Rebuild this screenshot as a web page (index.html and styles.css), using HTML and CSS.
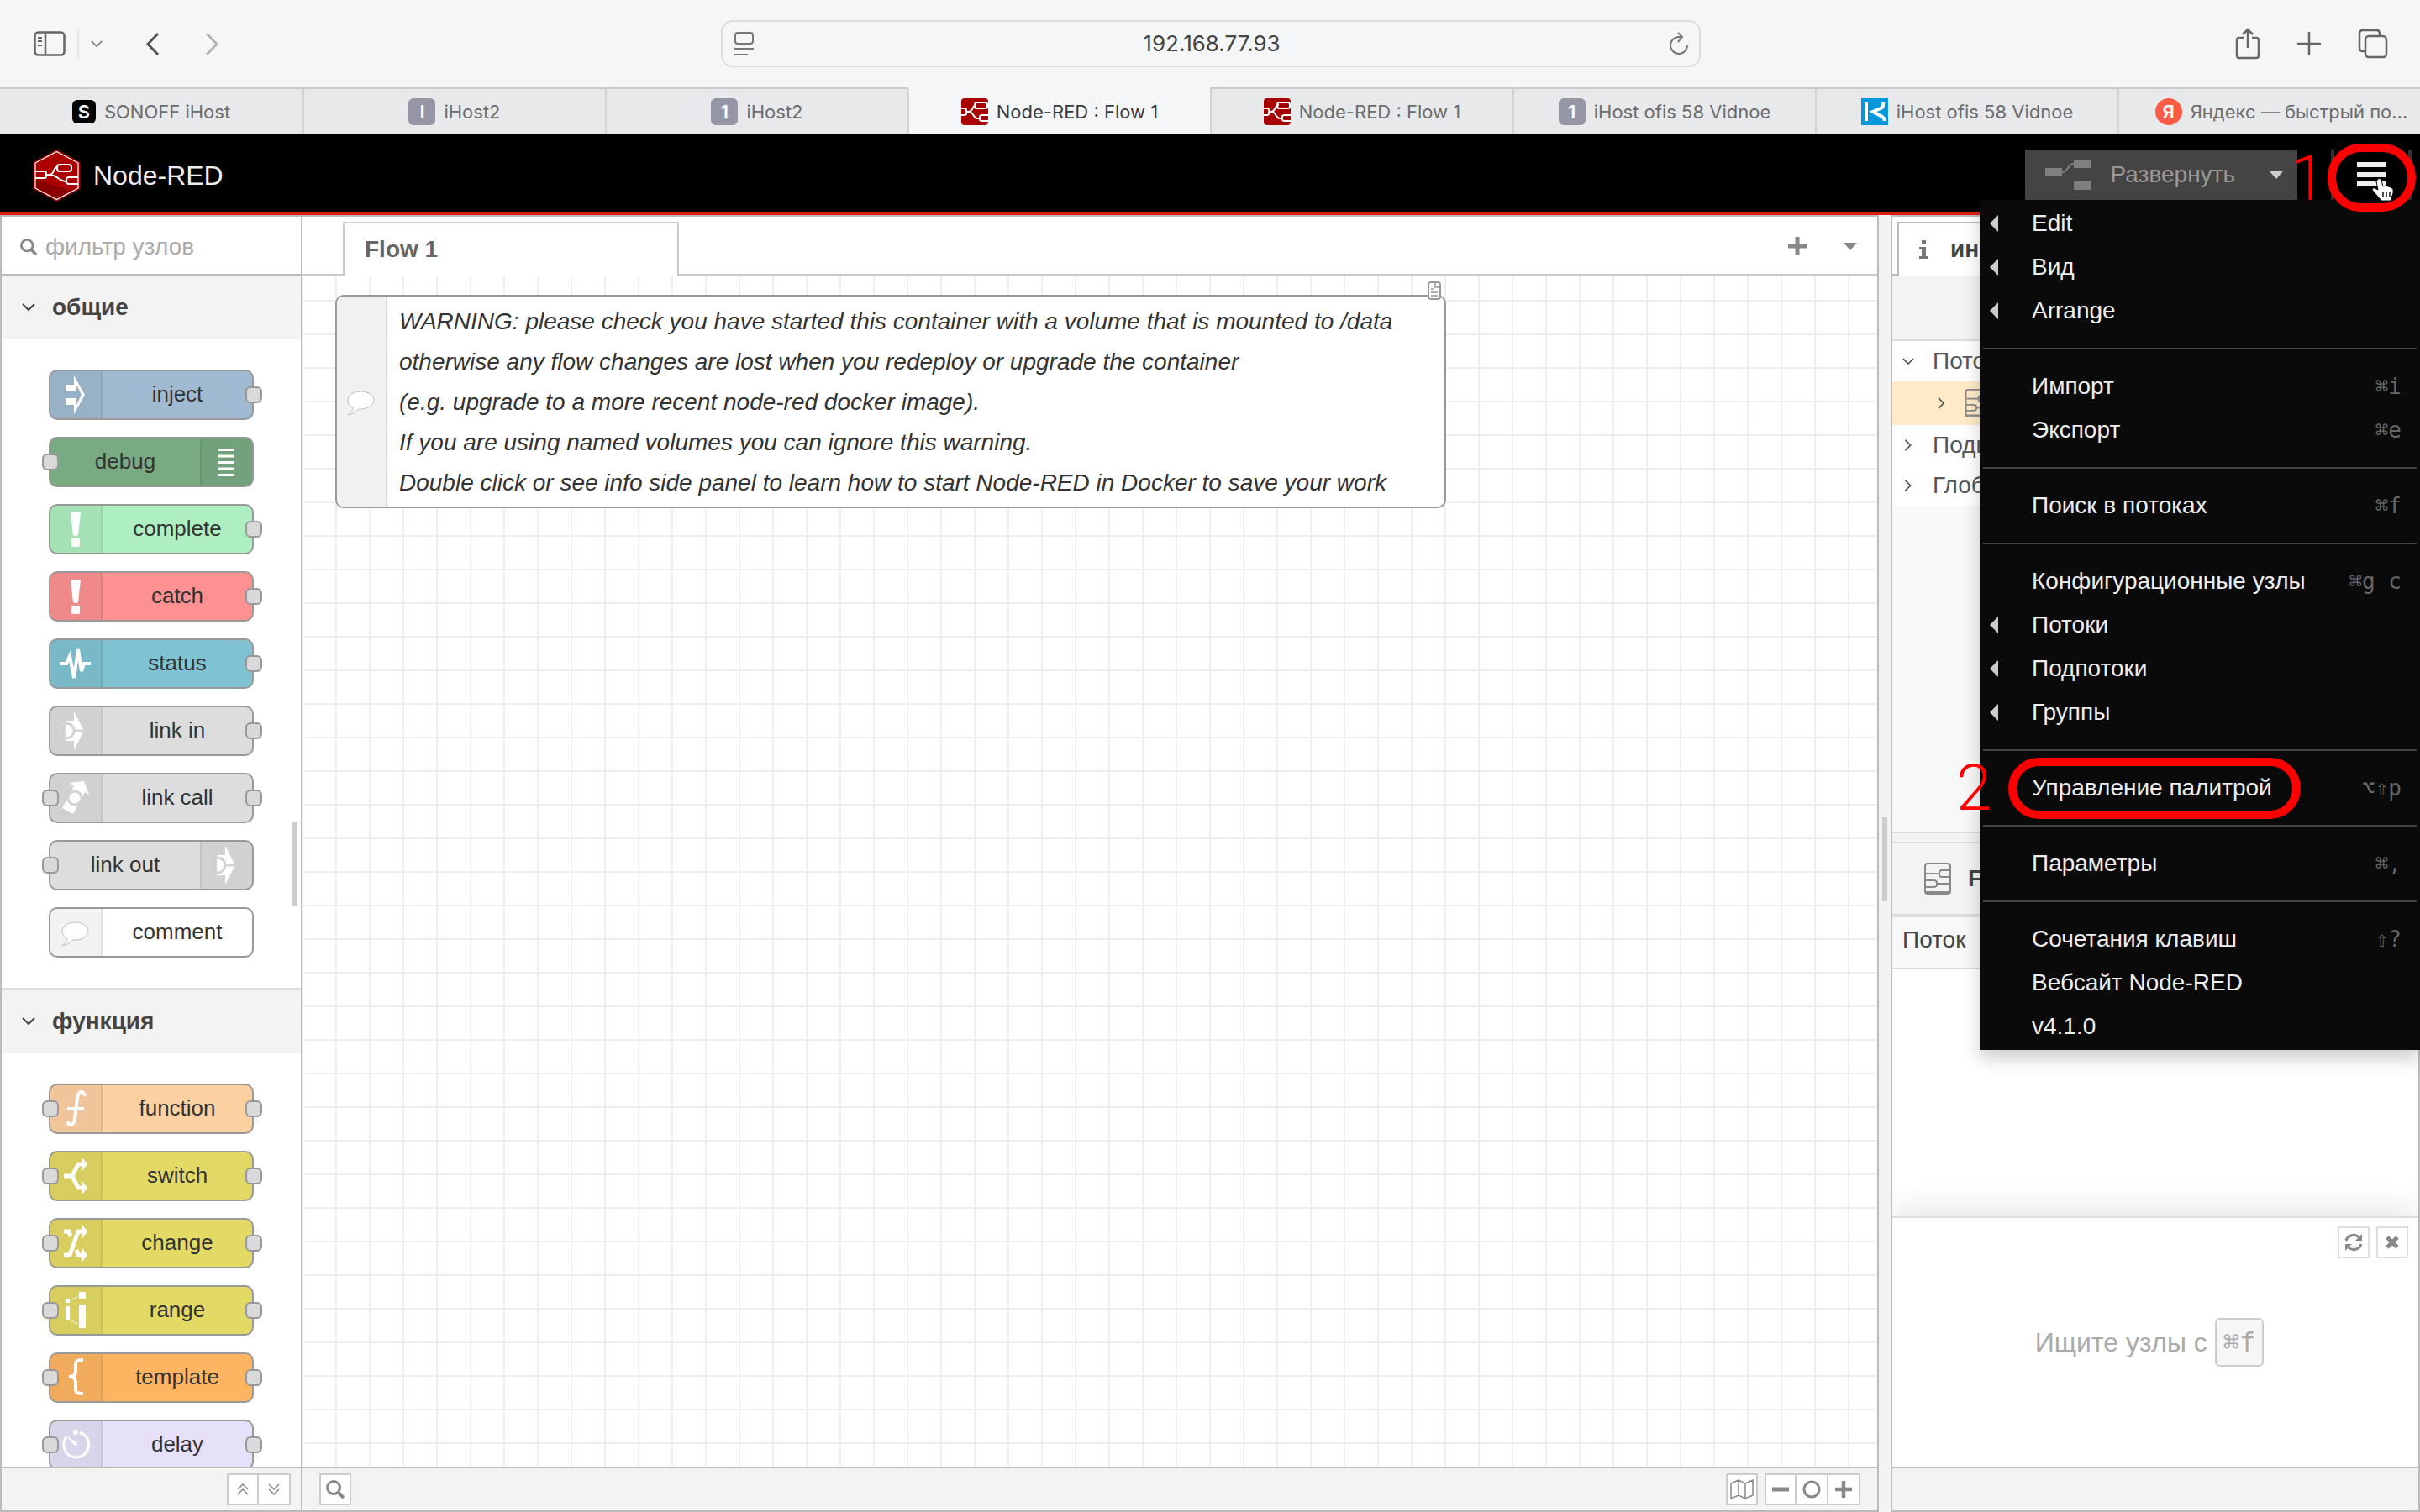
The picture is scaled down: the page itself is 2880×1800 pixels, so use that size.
FILE: index.html
```html
<!DOCTYPE html>
<html lang="ru">
<head>
<meta charset="utf-8">
<meta name="viewport" content="width=device-width, initial-scale=1">
<title>Node-RED : Flow 1</title>
<link rel="stylesheet" href="styles.css">
</head>
<body>
<svg class="defs" aria-hidden="true">
  <symbol id="nr" viewBox="0 0 32 32"><rect width="32" height="32" rx="4" fill="#a80000"/><g fill="none" stroke="#fff" stroke-width="2"><path d="M0 12h4q2 0 2 2v4q0 2-2 2H0M6 16h3c5 0 4-8 9-8M9 16c6 0 5 8 10 8h3"/><rect x="16" y="5" width="15" height="7" rx="2.500"/><path d="M32 20h-7q-3 0-3 2v3q0 2 3 2h7"/></g></symbol>
  <symbol id="logo" viewBox="0 0 55 62"><path d="M27.500 0 55 15v32L27.500 62 0 47V15z" fill="#a00"/><path d="M2 36 48 50 27 60 2 47z" fill="#800"/><path d="M27.500 2.500 53 16v30L27.500 59.500 2 46V16z" fill="none" stroke="#fff" stroke-width="1.200"/><g fill="none" stroke="#fff" stroke-width="2"><path d="M2 26h11q2 0 2 2v4q0 2-2 2H2M15 30h4c6 0 4-9 9-9M19 30c9 0 11 8 20 8"/><rect x="28" y="18" width="17" height="8" rx="3"/><path d="M53 33H42q-3 0-3 3v2q0 3 3 3h11"/></g></symbol>
  <symbol id="down" viewBox="0 0 16 10"><path d="M1 1l7 7 7-7" fill="none" stroke="currentColor" stroke-width="2"/></symbol>
  <symbol id="right" viewBox="0 0 10 16"><path d="M1 1l7 7-7 7" fill="none" stroke="currentColor" stroke-width="2"/></symbol>
  <symbol id="caret" viewBox="0 0 16 9"><path d="M0 0h16L8 9z" fill="currentColor"/></symbol>
  <symbol id="caretl" viewBox="0 0 10 20"><path d="M10 0v20L0 10z" fill="currentColor"/></symbol>
  <symbol id="search" viewBox="0 0 22 22"><circle cx="9" cy="9" r="7.500" fill="none" stroke="currentColor" stroke-width="3"/><path d="M14 14l7 7" stroke="currentColor" stroke-width="4"/></symbol>
  <symbol id="flow" viewBox="0 0 32 38"><g fill="none" stroke="currentColor" stroke-width="2"><rect x="1" y="1" width="30" height="36" rx="3"/><path d="M2 13h16M31 9H21q-3 0-3 3v2q0 3 3 3h10M30 25H15M1 21h10q4 0 4 3v2q0 3-4 3H1M1 35h30"/></g></symbol>
  <symbol id="plus" viewBox="0 0 22 22"><path d="M11 0v22M0 11h22" stroke="currentColor" stroke-width="5"/></symbol>
  <symbol id="i-link" viewBox="2 2 60 56"><path d="M20 18h10V7l12 23-12 23V42H20z" fill="#fff"/><g fill="none" stroke="#d3d3d3" stroke-width="3"><circle cx="21" cy="30" r="9"/><path d="M30 30h14"/></g></symbol>
  <symbol id="i-bang" viewBox="2 2 60 56"><path d="M26 10h12l-3 27q-3 2-6 0zM28 41h8q1 0 1 2v6q0 2-1 2h-8q-1 0-1-2v-6q0-2 1-2z" fill="#fff"/></symbol>
  <symbol id="i-comment" viewBox="2 2 60 56"><path d="M31.500 18c9 0 15.500 5 15.500 10.500S40 39 31.500 39h-3c-3 3-6 6-12 6.500 3-2 6-5 5.500-8.500-4-2-6-5-6-8.500C16 23 22.500 18 31.500 18z" fill="#fff" stroke="#bbb"/></symbol>
</svg>

<header class="browser">
  <div class="toolbar">
    <div class="tools">
      <button class="tool" aria-label="Боковая панель"><svg width="38" height="30" viewBox="0 0 38 30"><g fill="none" stroke="#666" stroke-width="2.500"><rect x="1.500" y="1.500" width="35" height="27" rx="4"/><path d="M14 2v26"/><path d="M5 8h5M5 12h5M5 17h5" stroke-width="2"/></g></svg></button>
      <button class="tool tool-more" aria-label="Группы вкладок"><svg width="14" height="9"><use href="#down"/></svg></button>
      <button class="tool tool-back" aria-label="Назад"><svg width="17" height="29" viewBox="0 0 17 29"><path d="M15 2 3 14.500 15 27" fill="none" stroke="#555" stroke-width="3"/></svg></button>
      <button class="tool tool-next" aria-label="Вперёд"><svg width="17" height="29" viewBox="0 0 17 29"><path d="M2 2l12 12.500L2 27" fill="none" stroke="#b2b4b6" stroke-width="3"/></svg></button>
    </div>
    <div class="address">
      <svg width="24" height="28" viewBox="0 0 24 28"><g fill="none" stroke="#777" stroke-width="2"><rect x="1" y="1" width="21" height="13" rx="3"/><path d="M0 20h23M0 27h16"/></g></svg>
      <input class="url" aria-label="Адрес" value="192.168.77.93">
      <button class="tool" aria-label="Обновить"><svg width="24" height="28" viewBox="0 0 24 28"><path d="M12 6a10 10 0 1 0 10 10M12 6h4M11 1l5 5-5 6" fill="none" stroke="#777" stroke-width="2"/></svg></button>
    </div>
    <div class="tools tools-end">
      <button class="tool" aria-label="Поделиться"><svg width="30" height="38" viewBox="0 0 30 38"><g fill="none" stroke="#666" stroke-width="2.500"><path d="M10 12H5q-3 0-3 3v18q0 3 3 3h20q3 0 3-3V15q0-3-3-3h-5M15 24V2M9 8l6-6 6 6"/></g></svg></button>
      <button class="tool" aria-label="Новая вкладка"><svg width="28" height="28" viewBox="0 0 28 28"><path d="M14 0v28M0 14h28" stroke="#666" stroke-width="2.500"/></svg></button>
      <button class="tool" aria-label="Все вкладки"><svg width="36" height="36" viewBox="0 0 36 36"><g fill="none" stroke="#666" stroke-width="2.500"><rect x="9" y="9" width="25" height="25" rx="4"/><path d="M9 27H6q-4 0-4-4V6q0-4 4-4h16q4 0 4 4v3"/></g></svg></button>
    </div>
  </div>
  <nav class="tabs">
    <a class="tab" href="#"><span class="fav fav-black">S</span>SONOFF iHost</a>
    <a class="tab" href="#"><span class="fav">I</span>iHost2</a>
    <a class="tab" href="#"><span class="fav">1</span>iHost2</a>
    <a class="tab tab-on" href="#"><svg width="32" height="32"><use href="#nr"/></svg>Node-RED : Flow 1</a>
    <a class="tab" href="#"><svg width="32" height="32"><use href="#nr"/></svg>Node-RED : Flow 1</a>
    <a class="tab" href="#"><span class="fav">1</span>iHost ofis 58 Vidnoe</a>
    <a class="tab" href="#"><svg width="32" height="32" viewBox="0 0 32 32"><rect width="32" height="32" fill="#0098db"/><path d="M6 5v22M26 5v3q0 3-3 4l-9 4 11 6q3 2 3 5" fill="none" stroke="#fff" stroke-width="4"/></svg>iHost ofis 58 Vidnoe</a>
    <a class="tab" href="#"><span class="fav fav-ya">Я</span>Яндекс — быстрый по...</a>
  </nav>
</header>

<header class="app-head">
  <div class="brand"><svg width="55" height="62"><use href="#logo"/></svg>Node-RED</div>
  <div class="deploy">
    <button class="deploy-go"><svg width="54" height="36" viewBox="0 0 54 36"><path d="M0 10h20v10H0zM34 0h20v10H34zM34 26h20v10H34z" fill="#7f7f7f"/><path d="M20 15c8 0 6-10 14-10" fill="none" stroke="#7f7f7f" stroke-width="2"/></svg>Развернуть</button>
    <button class="deploy-opt" aria-label="Варианты"><svg width="16" height="9"><use href="#caret"/></svg></button>
  </div>
  <div class="menu-wrap">
    <button class="burger" aria-label="Меню"><svg width="34" height="30" viewBox="0 0 34 30"><path d="M0 3h34M0 15h34M0 26h34" stroke="#eee" stroke-width="6"/></svg></button>
    <ul class="menu">
      <li><a href="#"><svg class="sub" width="10" height="20"><use href="#caretl"/></svg>Edit</a></li>
      <li><a href="#"><svg class="sub" width="10" height="20"><use href="#caretl"/></svg>Вид</a></li>
      <li><a href="#"><svg class="sub" width="10" height="20"><use href="#caretl"/></svg>Arrange</a></li>
      <li class="rule"></li>
      <li><a href="#">Импорт<kbd>⌘i</kbd></a></li>
      <li><a href="#">Экспорт<kbd>⌘e</kbd></a></li>
      <li class="rule"></li>
      <li><a href="#">Поиск в потоках<kbd>⌘f</kbd></a></li>
      <li class="rule"></li>
      <li><a href="#">Конфигурационные узлы<kbd>⌘g c</kbd></a></li>
      <li><a href="#"><svg class="sub" width="10" height="20"><use href="#caretl"/></svg>Потоки</a></li>
      <li><a href="#"><svg class="sub" width="10" height="20"><use href="#caretl"/></svg>Подпотоки</a></li>
      <li><a href="#"><svg class="sub" width="10" height="20"><use href="#caretl"/></svg>Группы</a></li>
      <li class="rule"></li>
      <li><a href="#">Управление палитрой<kbd>⌥⇧p</kbd></a><span class="ring ring-item"></span><span class="mark mark-two">2</span></li>
      <li class="rule"></li>
      <li><a href="#">Параметры<kbd>⌘,</kbd></a></li>
      <li class="rule"></li>
      <li><a href="#">Сочетания клавиш<kbd>⇧?</kbd></a></li>
      <li><a href="#">Вебсайт Node-RED</a></li>
      <li><a href="#">v4.1.0</a></li>
    </ul>
    <span class="ring ring-burger"></span>
    <span class="mark mark-one">1</span>
    <svg class="cursor" width="28" height="30" viewBox="0 0 28 30"><path d="M8 2q3-2 4 2l2 7 3-1 3 1 3 1 3 2v5l-3 9H12l-5-6-6-7q0-3 3-2l4 2L6 5z" fill="#fff" stroke="#111"/><path d="M14 17v7M18 17v7M22 17v7" stroke="#111" stroke-width="1.500"/></svg>
  </div>
</header>

<main class="editor">
  <aside class="palette">
    <label class="filter"><svg width="20" height="20"><use href="#search"/></svg><input placeholder="фильтр узлов"></label>
    <div class="palette-body">
      <h2 class="cat"><svg width="16" height="10"><use href="#down"/></svg>общие</h2>
      <ul class="nodes">
        <li class="node c-inject"><span class="ico"><svg viewBox="2 2 60 56"><path d="M20 18h10V7l13 23-13 23V42H20v-8h13v8l6-12-6-12v8H20z" fill="#fff"/></svg></span><span class="name">inject</span><i class="port out"></i></li>
        <li class="node flip c-debug"><span class="ico"><svg viewBox="2 2 60 56"><path d="M22 15.500h19M22 23h19M22 30.500h19M22 38h19M22 45.500h19" stroke="#fff" stroke-width="3"/></svg></span><span class="name">debug</span><i class="port in"></i></li>
        <li class="node c-complete"><span class="ico"><svg><use href="#i-bang"/></svg></span><span class="name">complete</span><i class="port out"></i></li>
        <li class="node c-catch"><span class="ico"><svg><use href="#i-bang"/></svg></span><span class="name">catch</span><i class="port out"></i></li>
        <li class="node c-status"><span class="ico"><svg viewBox="2 2 60 56"><path d="M13 30h8l4-9 5 26 5-34 4 26 3-9h8" fill="none" stroke="#fff" stroke-width="4"/></svg></span><span class="name">status</span><i class="port out"></i></li>
        <li class="node c-link"><span class="ico"><svg><use href="#i-link"/></svg></span><span class="name">link in</span><i class="port out"></i></li>
        <li class="node c-link"><span class="ico"><svg viewBox="2 2 60 56"><path d="M42 10l6 16-5-3-14 26-13-7 14-26-5-4z" fill="#fff"/><circle cx="31" cy="30" r="8" fill="#fff" stroke="#d3d3d3" stroke-width="3"/></svg></span><span class="name">link call</span><i class="port in"></i><i class="port out"></i></li>
        <li class="node flip c-link"><span class="ico"><svg><use href="#i-link"/></svg></span><span class="name">link out</span><i class="port in"></i></li>
        <li class="node c-comment"><span class="ico"><svg><use href="#i-comment"/></svg></span><span class="name">comment</span></li>
      </ul>
      <h2 class="cat cat-next"><svg width="16" height="10"><use href="#down"/></svg>функция</h2>
      <ul class="nodes">
        <li class="node c-function"><span class="ico"><svg viewBox="2 2 60 56"><path d="M43 15c-1-7-8-7-9 2l-3 25c-1 8-7 9-9 3M22 30h20" fill="none" stroke="#fff" stroke-width="4"/></svg></span><span class="name">function</span><i class="port in"></i><i class="port out"></i></li>
        <li class="node c-switch"><span class="ico"><svg viewBox="2 2 60 56"><path d="M18 30h10l7-14h6M28 30l7 14h6" fill="none" stroke="#fff" stroke-width="5"/><path d="M39 7l7 9-7 9zM39 35l7 9-7 9z" fill="#fff"/></svg></span><span class="name">switch</span><i class="port in"></i><i class="port out"></i></li>
        <li class="node c-switch"><span class="ico"><svg viewBox="2 2 60 56"><path d="M18 44h7l10-28h6M18 16h6l2 6M33 38l2 6h6" fill="none" stroke="#fff" stroke-width="5"/><path d="M39 7l7 9-7 9zM39 35l7 9-7 9z" fill="#fff"/></svg></span><span class="name">change</span><i class="port in"></i><i class="port out"></i></li>
        <li class="node c-switch"><span class="ico"><svg viewBox="2 2 60 56"><path d="M20 16h5v5h-5zM20 25h5v17h-5zM36 8h8v8h-8zM36 23h8v28h-8z" fill="#fff"/><path d="M27 17l7-3M27 42l7 4" stroke="#fff"/></svg></span><span class="name">range</span><i class="port in"></i><i class="port out"></i></li>
        <li class="node c-template"><span class="ico"><svg viewBox="2 2 60 56"><path d="M41 9c-8 0-9 1-9 7v6c0 5-2 7-8 7 6 0 8 2 8 7v6c0 6 1 7 9 7" fill="none" stroke="#fff" stroke-width="4"/></svg></span><span class="name">template</span><i class="port in"></i><i class="port out"></i></li>
        <li class="node c-delay"><span class="ico"><svg viewBox="2 2 60 56"><path d="M37 15.500a15 15 0 1 1-16 5" fill="none" stroke="#fff" stroke-width="3"/><path d="M20 18l14 10q1 3-3 3z" fill="#fff"/><circle cx="32" cy="15" r="3" fill="#fff"/></svg></span><span class="name">delay</span><i class="port in"></i><i class="port out"></i></li>
      </ul>
      <span class="thumb"></span>
    </div>
    <footer class="foot foot-palette">
      <div class="group">
        <button aria-label="Свернуть все"><svg width="14" height="14" viewBox="0 0 14 14"><path d="M1 7l6-6 6 6M1 13l6-6 6 6" fill="none" stroke="currentColor" stroke-width="1.500"/></svg></button>
        <button aria-label="Развернуть все"><svg width="14" height="14" viewBox="0 0 14 14"><path d="M1 1l6 6 6-6M1 7l6 6 6-6" fill="none" stroke="currentColor" stroke-width="1.500"/></svg></button>
      </div>
    </footer>
  </aside>

  <section class="workspace">
    <div class="flow-tabs">
      <a class="flow-tab" href="#">Flow 1</a>
      <button class="bare" aria-label="Добавить поток"><svg width="22" height="22"><use href="#plus"/></svg></button>
      <button class="bare bare-list" aria-label="Список потоков"><svg width="16" height="9"><use href="#caret"/></svg></button>
    </div>
    <div class="canvas">
      <div class="note">
        <span class="note-ico"><svg width="60" height="56"><use href="#i-comment"/></svg></span>
        <p class="note-text">WARNING: please check you have started this container with a volume that is mounted to /data<br>otherwise any flow changes are lost when you redeploy or upgrade the container<br>(e.g. upgrade to a more recent node-red docker image).<br>If you are using named volumes you can ignore this warning.<br>Double click or see info side panel to learn how to start Node-RED in Docker to save your work</p>
        <svg class="doc" width="16" height="22" viewBox="0 0 16 22"><g fill="#fff" stroke="#999" stroke-width="2"><rect x="1" y="1" width="14" height="20" rx="3"/><path d="M9 1v6h6M4 9h3M4 13h8M4 17h8" stroke-width="1.500"/></g></svg>
      </div>
    </div>
    <footer class="foot foot-work">
      <div class="group group-first"><button aria-label="Поиск"><svg width="22" height="22"><use href="#search"/></svg></button></div>
      <div class="group"><button aria-label="Карта"><svg width="28" height="24" viewBox="0 0 28 24"><path d="M1 5l9-4 8 4 9-4v18l-9 4-8-4-9 4zM10 1v18M18 5v18" fill="none" stroke="currentColor" stroke-width="1.500"/></svg></button></div>
      <div class="group">
        <button aria-label="Уменьшить"><svg width="20" height="20" viewBox="0 0 20 20"><path d="M0 10h20" stroke="currentColor" stroke-width="5"/></svg></button>
        <button aria-label="Сбросить масштаб"><svg width="22" height="22" viewBox="0 0 22 22"><circle cx="11" cy="11" r="9" fill="none" stroke="currentColor" stroke-width="3"/></svg></button>
        <button aria-label="Увеличить"><svg width="20" height="20"><use href="#plus"/></svg></button>
      </div>
    </footer>
  </section>

  <div class="split"><span class="grip"></span></div>

  <aside class="sidebar">
    <div class="side-tabs"><a class="side-tab" href="#"><svg width="11" height="22" viewBox="0 0 11 22"><path d="M3 0h5v5H3zM0 8h8v11h3v3H0v-3h3v-8H0z" fill="#777"/></svg>информация</a></div>
    <div class="side-tools"></div>
    <div class="tree-pane">
      <ul class="tree">
        <li><svg width="14" height="9"><use href="#down"/></svg>Потоки</li>
        <li class="tree-on"><svg width="9" height="14"><use href="#right"/></svg><svg class="flow-ico" width="32" height="34"><use href="#flow"/></svg></li>
        <li><svg width="14" height="14"><use href="#right"/></svg>Подпотоки</li>
        <li><svg width="14" height="14"><use href="#right"/></svg>Глобальные</li>
      </ul>
    </div>
    <div class="side-split"></div>
    <h3 class="prop-head"><svg width="32" height="38"><use href="#flow"/></svg>Flow 1</h3>
    <table class="props"><tr><th scope="row">Поток</th><td></td></tr></table>
    <div class="prop-rest"></div>
    <section class="tip">
      <div class="tip-tools">
        <button aria-label="Другая подсказка"><svg width="22" height="22" viewBox="0 0 22 22"><path d="M2 9a9 9 0 0 1 15-4M20 13a9 9 0 0 1-15 4" fill="none" stroke="currentColor" stroke-width="3"/><path d="M21 1v8h-8zM1 21v-8h8z" fill="currentColor"/></svg></button>
        <button aria-label="Закрыть"><svg width="16" height="16" viewBox="0 0 16 16"><path d="M2 2l12 12M14 2L2 14" stroke="currentColor" stroke-width="5"/></svg></button>
      </div>
      <p class="tip-text">Ищите узлы с <kbd class="key">⌘f</kbd></p>
    </section>
    <footer class="foot"></footer>
  </aside>
</main>
</body>
</html>
```
FILE: styles.css
```css
* { box-sizing: border-box; }
body {
  margin: 0;
  height: 100vh;
  display: flex;
  flex-direction: column;
  overflow: hidden;
  font: 28px/40px "Liberation Sans", Arial, sans-serif;
  color: #333;
  background: #f3f3f3;
}
button, input { font: inherit; color: inherit; border: 0; background: none; padding: 0; }
a { color: inherit; text-decoration: none; }
ul { list-style: none; margin: 0; padding: 0; }
svg { display: block; flex: none; }
.defs { position: absolute; width: 0; height: 0; }

/* browser chrome */
.browser { font-family: Inter, sans-serif; background: #f5f6f8; }
.toolbar {
  height: 104px;
  display: grid;
  grid-template-columns: 1fr minmax(400px, 1166px) 1fr;
  align-items: center;
  padding: 0 38px 0 40px;
}
.tools { display: flex; align-items: center; }
.tools-end { justify-content: flex-end; gap: 44px; }
.tool { display: flex; color: #777; }
.tool-more { margin-left: 14px; padding: 12px 0 12px 14px; border-left: 2px solid #e6e7e9; }
.tool-back { margin-left: 51px; }
.tool-next { margin-left: 54px; }
.address {
  height: 56px;
  display: flex;
  align-items: center;
  padding: 0 12px 0 14px;
  border: 2px solid #dcdddf;
  border-radius: 14px;
}
.url { flex: 1; min-width: 0; text-align: center; font-size: 26px; color: #444; }
.tabs { display: grid; grid-template-columns: repeat(8, minmax(0, 1fr)); height: 56px; }
.tab {
  display: flex;
  align-items: center;
  justify-content: center;
  gap: 10px;
  font-size: 22px;
  white-space: nowrap;
  color: #6c6d6f;
  background: #e8e9eb;
  border-top: 2px solid #c9cacc;
  border-left: 2px solid #d2d3d5;
}
.tab:first-child { border-left: 0; }
.tab:last-child { padding-left: 28px; }
.tab-on { background: #f5f6f8; border-top-color: #f5f6f8; color: #3c3c3e; }
.fav {
  width: 32px;
  height: 32px;
  border-radius: 6px;
  background: #9496a5;
  color: #fff;
  font-weight: 600;
  line-height: 32px;
  text-align: center;
}
.fav-black { width: 28px; height: 28px; line-height: 28px; background: #000; }
.fav-ya { background: #fc5b45; border-radius: 50%; }

/* application header */
.app-head {
  position: relative;
  z-index: 2;
  height: 96px;
  display: flex;
  align-items: flex-start;
  padding: 18px 10px 0 40px;
  background: #000;
  border-bottom: 4px solid #e31b16;
}
.brand { display: flex; align-items: center; gap: 16px; flex: 1; font-size: 32px; color: #eee; }
.deploy { display: flex; height: 60px; background: #444; color: #999; }
.deploy-go { display: flex; align-items: center; gap: 24px; padding: 0 24px; }
.deploy-opt { width: 50px; display: flex; align-items: center; justify-content: center; color: #ccc; }
.menu-wrap { position: relative; margin-left: 40px; }
.burger {
  width: 96px;
  height: 60px;
  display: flex;
  align-items: center;
  justify-content: center;
  border: solid #333;
  border-width: 0 4px;
}
.menu {
  position: absolute;
  top: 60px;
  right: -10px;
  width: 524px;
  padding: 2px 0;
  background: #0a0a0a;
  color: #eee;
  box-shadow: 0 10px 20px rgba(0, 0, 0, .2);
}
.menu li { position: relative; }
.menu a { display: flex; height: 52px; align-items: center; padding: 0 22px 0 62px; white-space: nowrap; }
.menu .sub { margin: 0 40px 0 -50px; color: #ccc; }
.menu kbd { margin-left: auto; font: 26px "DejaVu Sans Mono", monospace; color: #666; white-space: pre; }
.menu .rule { height: 2px; margin: 18px 4px; background: #444; }

.ring { position: absolute; border: 10px solid #f00; border-radius: 40px; pointer-events: none; }
.ring-burger { left: -4px; top: -7px; width: 105px; height: 81px; }
.ring-item { left: 34px; top: -10px; width: 348px; height: 73px; }
.mark { position: absolute; font: 300 76px/76px Roboto, sans-serif; color: #f00; }
.mark-one { left: -48px; top: -4px; }
.mark-two { left: -28px; top: -12px; }
.cursor { position: absolute; left: 48px; top: 33px; }

/* editor */
.editor { flex: 1; min-height: 0; display: grid; grid-template-columns: 360px minmax(0, 1fr) 14px 630px; }
.palette, .workspace, .sidebar {
  display: flex;
  flex-direction: column;
  min-height: 0;
  min-width: 0;
  overflow: hidden;
  border: 2px solid #bbb;
  background: #fff;
}
.workspace { border-left: 0; }
.foot { position: relative; height: 52px; flex: none; display: flex; align-items: center; background: #f3f3f3; border-top: 2px solid #bbb; }

.filter { height: 70px; flex: none; display: flex; align-items: center; gap: 10px; padding: 4px 20px 0 22px; border-bottom: 2px solid #bbb; color: #888; }
.filter input { flex: 1; min-width: 0; outline: 0; }
.filter input::placeholder { color: #aaa; opacity: 1; }
.palette-body { position: relative; flex: 1; min-height: 0; overflow: hidden; }
.cat { height: 76px; display: flex; align-items: center; gap: 20px; margin: 0; padding-left: 24px; font-size: 28px; background: #f3f3f3; color: #444; }
.cat-next { height: 78px; border-top: 2px solid #ddd; }
.nodes { display: flex; flex-direction: column; gap: 20px; padding: 36px 56px; }
.node { position: relative; display: flex; height: 60px; border: 2px solid #999; border-radius: 10px; color: #333; font-size: 26px; }
.flip { flex-direction: row-reverse; }
.ico { width: 62px; flex: none; border-right: 2px solid rgba(0, 0, 0, .07); background: rgba(0, 0, 0, .05); border-radius: 8px 0 0 8px; }
.flip .ico { border-right: 0; border-left: 2px solid rgba(0, 0, 0, .07); border-radius: 0 8px 8px 0; }
.ico svg { width: 60px; height: 56px; }
.name { flex: 1; text-align: center; line-height: 54px; }
.port { position: absolute; top: 18px; width: 20px; height: 20px; border: 2px solid #999; border-radius: 6px; background: #d9d9d9; }
.in { left: -10px; }
.out { right: -12px; }
.c-inject { background: #a0bbd1; }
.c-debug { background: #79ab82; }
.c-complete { background: #adefc0; }
.c-catch { background: #fd9191; }
.c-status { background: #7fc2d2; }
.c-link { background: #ddd; }
.c-comment { background: #fff; }
.c-function { background: #fdd0a2; }
.c-switch { background: #e3da65; }
.c-template { background: #feb562; }
.c-delay { background: #e6e0f8; }
.thumb { position: absolute; right: 4px; top: 650px; width: 6px; height: 100px; background: #ccc; }

.group { display: flex; border: 2px solid #ccc; background: #fff; }
.group button { width: 34px; height: 34px; display: flex; align-items: center; justify-content: center; color: #888; }
.group button + button { width: 38px; border-left: 2px solid #ccc; }
.foot-palette { justify-content: flex-end; padding-right: 12px; }
.foot-work { gap: 8px; padding: 0 20px; }
.group-first { margin-right: auto; }

.flow-tabs { height: 70px; flex: none; display: flex; align-items: center; padding: 0 24px 0 48px; border-bottom: 2px solid #ccc; color: #888; }
.flow-tab {
  width: 400px;
  height: 64px;
  margin: 6px auto -2px 0;
  padding-left: 24px;
  line-height: 62px;
  align-self: flex-start;
  font-weight: bold;
  color: #666;
  background: #fff;
  border: 2px solid #ccc;
  border-bottom: 0;
}
.bare { display: flex; padding-top: 2px; }
.bare-list { margin-left: 44px; }
.canvas {
  position: relative;
  flex: 1;
  min-height: 0;
  overflow: hidden;
  background: linear-gradient(#eee 2px, transparent 2px) 0 -11px / 40px 40px, linear-gradient(90deg, #eee 2px, transparent 2px) -1px 0 / 40px 40px;
}
.note { position: absolute; left: 39px; top: 23px; width: 1322px; display: flex; background: #fff; border: 2px solid #999; border-radius: 10px; }
.note-ico { width: 60px; display: flex; align-items: center; justify-content: center; background: #f1f1f1; border-right: 2px solid #d9d9d9; border-radius: 8px 0 0 8px; }
.note-text { margin: 0; padding: 6px 0 4px 14px; line-height: 48px; font-style: italic; white-space: nowrap; }
.doc { position: absolute; right: 4px; top: -18px; }

.split { position: relative; }
.grip { position: absolute; left: 4px; top: 717px; width: 6px; height: 100px; background: #ccc; }

/* sidebar */
.side-tabs { height: 70px; flex: none; padding: 6px 0 0 6px; border-bottom: 2px solid #bbb; }
.side-tab { display: flex; align-items: center; gap: 26px; width: 400px; height: 64px; padding-left: 24px; font-weight: bold; color: #444; background: #fff; border: 2px solid #bbb; border-bottom: 0; }
.side-tools { height: 78px; flex: none; background: #f3f3f3; border-bottom: 2px solid #ddd; }
.tree-pane { height: 584px; flex: none; background: #f8f8f8; }
.tree { background: #fff; color: #555; }
.tree li { display: flex; align-items: center; height: 48px; gap: 20px; padding-left: 12px; }
.tree li svg:first-child { margin-right: 2px; }
.tree .tree-on { height: 52px; padding-left: 54px; background: #ffebc7; }
.flow-ico { color: #888; }
.side-split { height: 14px; flex: none; background: #f3f3f3; border: solid #ddd; border-width: 2px 0; }
.prop-head { height: 88px; flex: none; display: flex; align-items: center; gap: 20px; margin: 0; padding-left: 38px; font-size: 28px; color: #444; background: #f3f3f3; border-bottom: 4px solid #ddd; }
.prop-head svg { color: #888; }
.props { width: 100%; height: 62px; flex: none; border-collapse: collapse; background: #f8f8f8; border-bottom: 2px solid #ddd; color: #444; }
.props th { width: 180px; padding: 6px 12px 12px; text-align: left; font-weight: normal; }
.prop-rest { flex: 1; min-height: 0; }
.tip { height: 298px; flex: none; display: flex; flex-direction: column; border-top: 2px solid #ddd; background: #fff; box-shadow: 0 -5px 40px rgba(0, 0, 0, .12); }
.tip-tools { display: flex; justify-content: flex-end; gap: 8px; padding: 10px 12px 0; }
.tip-tools button { width: 38px; height: 38px; display: flex; align-items: center; justify-content: center; border: 2px solid #ddd; color: #888; }
.tip-text { margin: 70px 0 0; padding-right: 14px; text-align: center; font-size: 32px; line-height: 60px; color: #aaa; }
.key { display: inline-block; padding: 0 8px; font: 32px/54px "DejaVu Sans Mono", monospace; background: #f6f6f6; border: 2px solid #ccc; border-radius: 6px; }
```
